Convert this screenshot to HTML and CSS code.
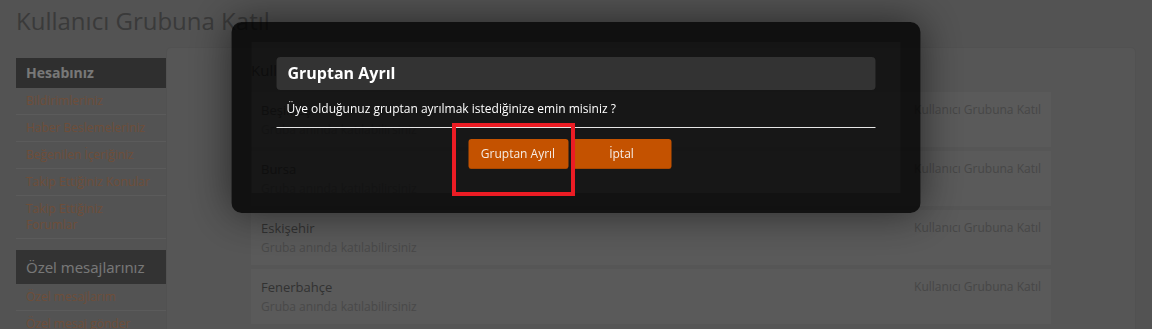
FILE: index.html
```html
<!DOCTYPE html>
<html lang="tr">

<head>
    <meta charset="UTF-8">
    <meta name="viewport" content="width=device-width, initial-scale=1.0">
    <title>Kullanıcı Grubuna Katıl</title>
    <link rel="stylesheet" href="styles.css">
</head>

<body>
    <h1 class="page-title">Kullanıcı Grubuna Katıl</h1>

    <div class="layout">
        <aside class="sidebar">
            <div class="side-head">Hesabınız</div>
            <ul class="side-list">
                <li><a href="#">Bildirimleriniz</a></li>
                <li><a href="#">Haber Beslemeleriniz</a></li>
                <li><a href="#">Beğenilen İçeriğiniz</a></li>
                <li><a href="#">Takip Ettiğiniz Konular</a></li>
                <li><a href="#">Takip Ettiğiniz Forumlar</a></li>
            </ul>

            <div class="side-head side-head-big">Özel mesajlarınız</div>
            <ul class="side-list">
                <li><a href="#">Özel mesajlarım</a></li>
                <li><a href="#">Özel mesaj gönder</a></li>
            </ul>
        </aside>

        <main class="panel">
            <h2 class="panel-title">Kullanıcı Grupları</h2>

            <div class="group-list">
                <div class="group-row">
                    <div>
                        <div class="group-name">Beşiktaş</div>
                        <div class="group-desc">Gruba anında katılabilirsiniz</div>
                    </div>
                    <a href="#" class="group-join">Kullanıcı Grubuna Katıl</a>
                </div>
                <div class="group-row">
                    <div>
                        <div class="group-name">Bursa</div>
                        <div class="group-desc">Gruba anında katılabilirsiniz</div>
                    </div>
                    <a href="#" class="group-join">Kullanıcı Grubuna Katıl</a>
                </div>
                <div class="group-row">
                    <div>
                        <div class="group-name">Eskişehir</div>
                        <div class="group-desc">Gruba anında katılabilirsiniz</div>
                    </div>
                    <a href="#" class="group-join">Kullanıcı Grubuna Katıl</a>
                </div>
                <div class="group-row">
                    <div>
                        <div class="group-name">Fenerbahçe</div>
                        <div class="group-desc">Gruba anında katılabilirsiniz</div>
                    </div>
                    <a href="#" class="group-join">Kullanıcı Grubuna Katıl</a>
                </div>
            </div>
        </main>
    </div>

    <!-- karartma + onay penceresi -->
    <div class="overlay"></div>

    <div class="modal">
        <div class="modal-inner">
            <div class="modal-title">Gruptan Ayrıl</div>
            <p class="modal-text">Üye olduğunuz gruptan ayrılmak istediğinize emin misiniz ?</p>
            <div class="modal-actions">
                <button class="btn-orange">Gruptan Ayrıl</button>
                <button class="btn-orange btn-cancel">İptal</button>
            </div>
        </div>
    </div>

    <div class="highlight"></div>
</body>

</html>
```

FILE: styles.css
```css
* {
    box-sizing: border-box;
}

body {
    margin: 0;
    padding: 0 16px;
    font-family: 'Open Sans', sans-serif;
    background: #a6a6a6;
    color: #666;
    height: 329px;
    overflow: hidden;
}

.page-title {
    margin: 0;
    padding-top: 5px;
    height: 47px;
    font-size: 24px;
    line-height: 32px;
    font-weight: 400;
    color: #747474;
}

.layout {
    display: flex;
    align-items: flex-start;
}

/* sol menu */
.sidebar {
    width: 150px;
    flex-shrink: 0;
    margin-top: 11px;
}

.side-head {
    background: #5e5e5e;
    color: #f0f0f0;
    font-size: 14px;
    font-weight: 700;
    line-height: 30px;
    padding: 0 10px;
}

.side-head-big {
    margin-top: 11px;
    background: #666;
    font-size: 15px;
    font-weight: 400;
    line-height: 34px;
}

.side-list {
    list-style: none;
    margin: 0;
    padding: 0;
}

.side-list li {
    border-bottom: 1px solid #b6b6b6;
}

.side-list li a {
    display: block;
    padding: 5px 10px 5px;
    font-size: 12px;
    line-height: 16px;
    color: #dc9c72;
    text-decoration: none;
}

/* icerik */
.panel {
    flex: 1;
    background: #acacac;
    border: 1px solid #a2a2a2;
    border-radius: 5px;
    padding: 12px 84px 20px;
    min-height: 290px;
}

.panel-title {
    margin: 0 0 12px;
    font-size: 15px;
    line-height: 20px;
    font-weight: 400;
    color: #555;
}

.group-list {
    display: flex;
    flex-direction: column;
    gap: 4px;
}

.group-row {
    display: flex;
    justify-content: space-between;
    align-items: flex-start;
    height: 55px;
    padding: 9px 10px 0;
    background: #b4b4b4;
}

.group-name {
    font-size: 13px;
    line-height: 18px;
    color: #646464;
}

.group-desc {
    margin-top: 2px;
    font-size: 12px;
    line-height: 18px;
    color: #929292;
}

.group-join {
    font-size: 12px;
    line-height: 17px;
    color: #8e8e8e;
    text-decoration: none;
}

/* modal */
.overlay {
    position: fixed;
    inset: 0;
    background: rgba(0, 0, 0, 0.5);
}

.modal {
    position: fixed;
    top: 22px;
    left: 50%;
    transform: translateX(-50%);
    width: 689px;
    height: 191px;
    padding: 20px;
    background: rgba(0, 0, 0, 0.8);
    border-radius: 10px;
    box-shadow: 0 0 40px rgba(0, 0, 0, 0.55);
}

.modal-inner {
    height: 100%;
    padding: 15px 25px 0;
    background: rgba(255, 255, 255, 0.02);
}

.modal-title {
    background: #333;
    border-radius: 4px;
    height: 33px;
    padding: 0 11px;
    font-size: 16px;
    font-weight: 700;
    line-height: 33px;
    color: #fff;
}

.modal-text {
    margin: 11px 0 0;
    padding: 0 10px 10px;
    font-size: 12px;
    line-height: 16px;
    color: #fff;
    border-bottom: 1px solid #e6e6e6;
}

.modal-actions {
    display: flex;
    justify-content: center;
    gap: 4px;
    margin-top: 11px;
    padding-right: 13px;
}

.btn-orange {
    width: 100px;
    height: 30px;
    border: none;
    border-bottom: 1px solid #a94700;
    border-radius: 3px;
    background: #c45200;
    color: #f6ece4;
    font-family: 'Open Sans', sans-serif;
    font-size: 12px;
    cursor: pointer;
}

.btn-cancel {
    width: 99px;
}

/* kirmizi isaret */
.highlight {
    position: fixed;
    left: 452px;
    top: 123px;
    width: 123px;
    height: 73px;
    border: 4px solid #ec1c24;
}
```
